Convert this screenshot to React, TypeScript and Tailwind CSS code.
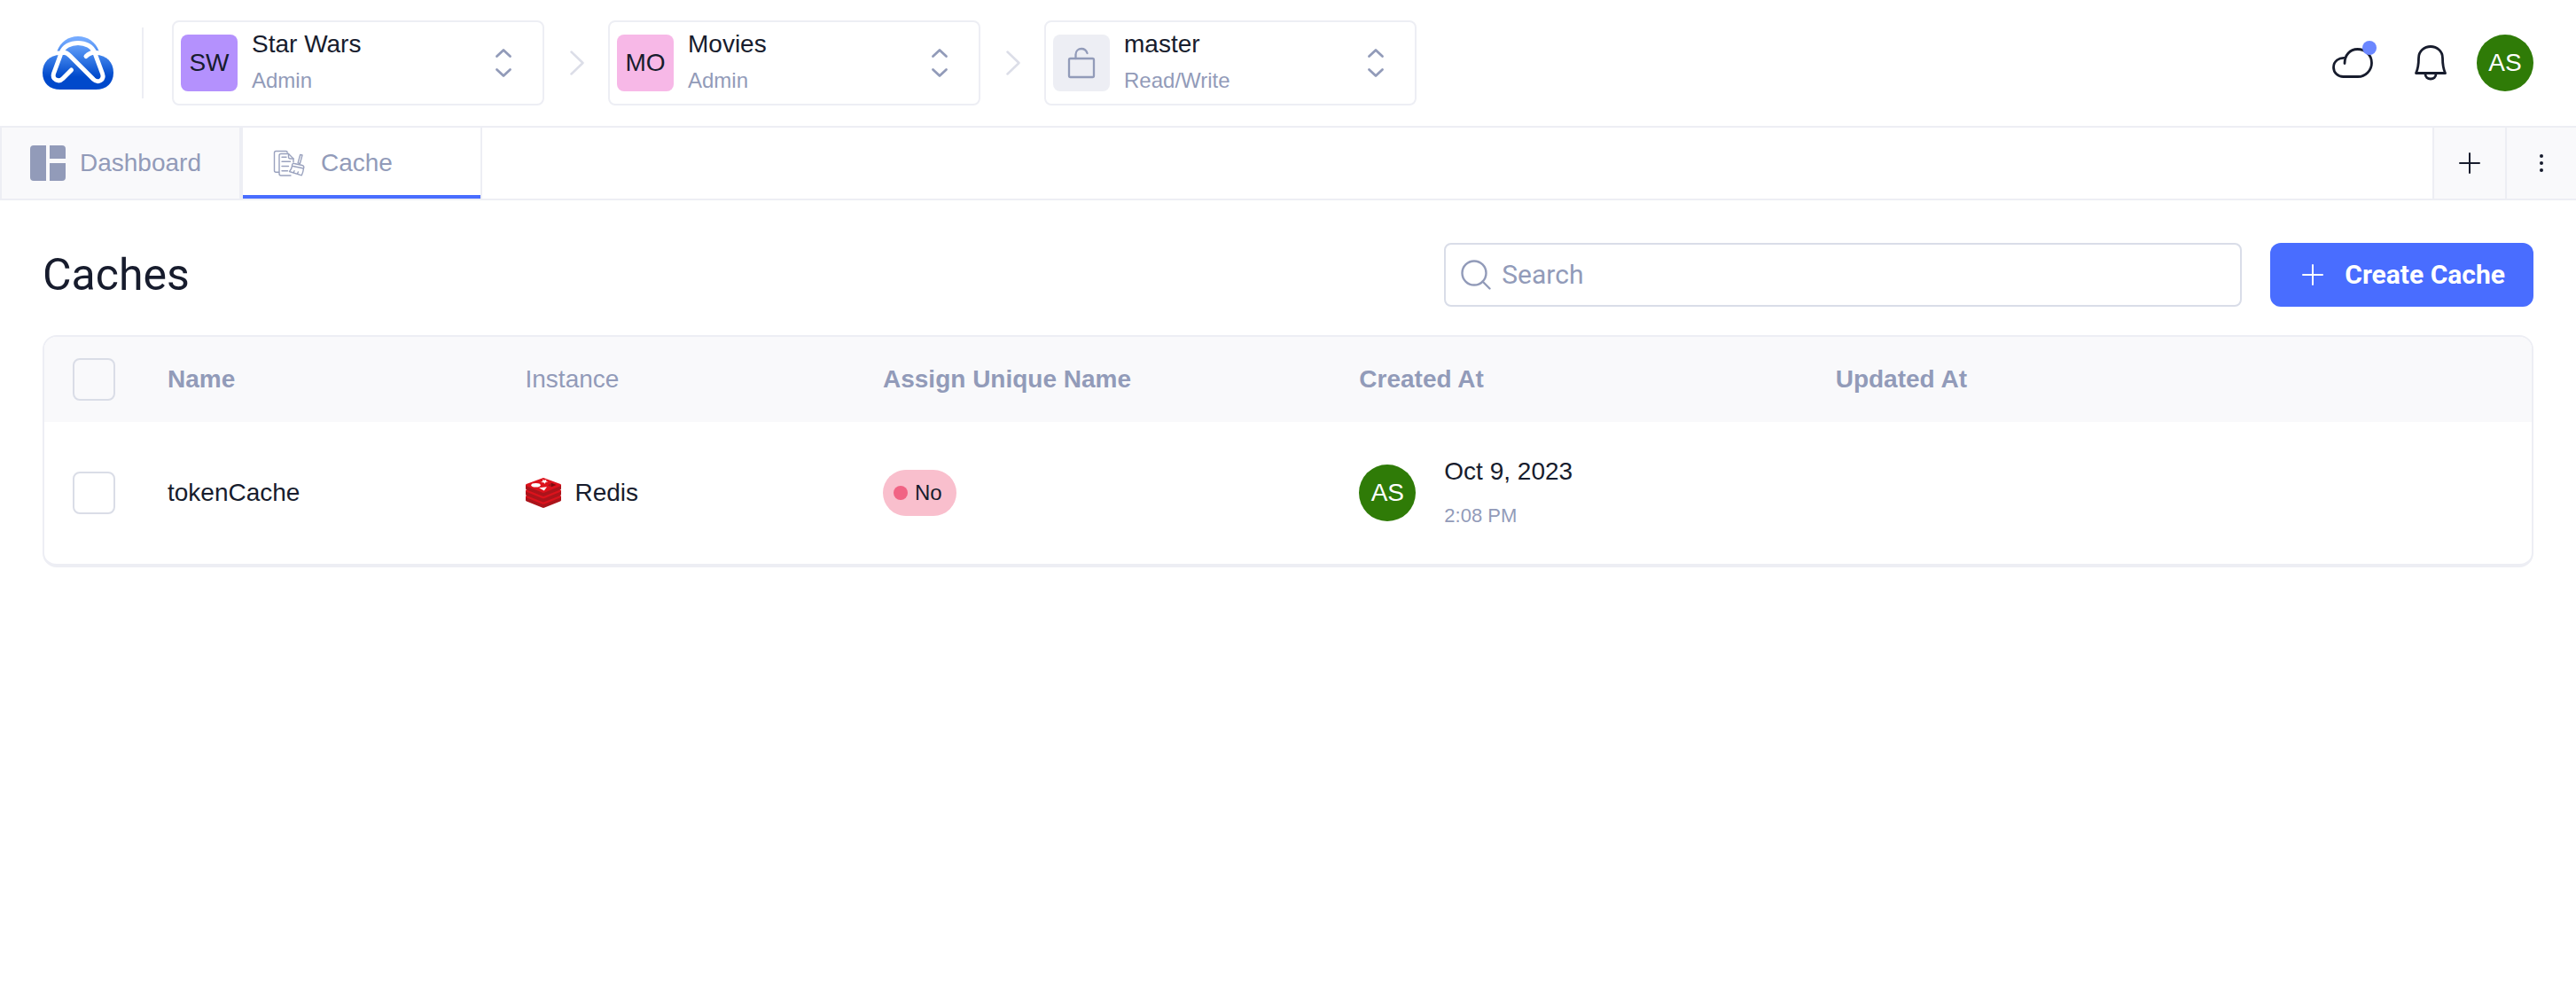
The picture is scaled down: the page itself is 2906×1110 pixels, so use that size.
import type { ReactNode } from "react";

function Logo() {
  return (
    <svg viewBox="0 0 80 60" className="h-[60px] w-20 shrink-0" fill="none" aria-hidden="true">
      <defs>
        <linearGradient id="sky" x1="0" y1="0" x2="0" y2="60" gradientUnits="userSpaceOnUse">
          <stop offset="0.05" stopColor="#75abff" />
          <stop offset="0.35" stopColor="#4285ec" />
          <stop offset="0.76" stopColor="#0049cb" />
        </linearGradient>
      </defs>
      <g fill="url(#sky)">
        <path d="M16.5 16.5C20 6.5 29 0 40 0s20 6.5 23.5 16.5Z" />
        <path d="M0 41C0 29 8 21 20 21h40c12 0 20 8 20 20s-8 19-20 19H20C8 60 0 53 0 41Z" />
        <path d="M23 24C27 6 53 6 58 24Z" />
      </g>
      <g stroke="#fff" strokeWidth="5" strokeLinecap="round" strokeLinejoin="round">
        <path d="M32.5 38 23 47.5c-5 5-12.5 1-10.5-5.5L21 19C26 3.5 54 3.5 59 19l8.5 23c2.5 7-4.500 11.500-10 6.500L31 22c-3-3-7-4.500-10-3" />
        <path d="M49 22.500c3-3 7-5 12-4" />
      </g>
    </svg>
  );
}

function UpDown() {
  return (
    <svg viewBox="0 0 20 34" className="h-[34px] w-5 shrink-0" fill="none" stroke="#929bb9" strokeWidth="2.8" strokeLinecap="round" strokeLinejoin="round" aria-hidden="true">
      <path d="m2.500 9.500 7.500-7 7.500 7M2.500 24.500l7.500 7 7.500-7" />
    </svg>
  );
}

function Separator() {
  return (
    <svg viewBox="0 0 18 30" className="mx-[27px] h-[30px] w-[18px] shrink-0" fill="none" stroke="#dcdee8" strokeWidth="2.5" strokeLinecap="round" strokeLinejoin="round" aria-hidden="true">
      <path d="m3.500 2.500 13 12.500-13 12.500" />
    </svg>
  );
}

function LockOpen() {
  return (
    <svg viewBox="0 0 32 36" className="h-9 w-8" fill="none" stroke="#929bb9" strokeWidth="2.3" strokeLinecap="round" strokeLinejoin="round" aria-hidden="true">
      <rect x="2" y="13" width="28" height="21" rx="1.5" />
      <path d="M9.500 13V8.500C9.500 4.500 12.500 2 16 2c3 0 5.500 2 6.500 5" />
    </svg>
  );
}

function CloudIcon() {
  return (
    <svg viewBox="0 0 46 34" className="h-[34px] w-[46px]" fill="none" stroke="#171c2d" strokeWidth="2.8" strokeLinecap="round" strokeLinejoin="round" aria-hidden="true">
      <path d="M14 17.500C14 8 20 1.500 28.500 1.500 37.500 1.500 44.500 8 44.500 17c0 8.500-7 15.500-15.500 15.500H12.500c-6 0-11-4.500-11-10.500 0-7 6-11.500 13.500-10.500" />
    </svg>
  );
}

function BellIcon() {
  return (
    <svg viewBox="0 0 36 40" className="h-10 w-9" fill="none" stroke="#171c2d" strokeWidth="2.8" strokeLinecap="round" strokeLinejoin="round" aria-hidden="true">
      <path d="M1.500 31.500C4 26 4.500 22 4.500 14.500 4.500 6.500 11 1.500 18 1.500s13.500 5 13.500 13c0 7.500.5 11.500 3 17Z" />
      <path d="M12 32.500c0 3.500 2.800 5.500 6 5.500s6-2 6-5.500" />
    </svg>
  );
}

function DashboardIcon() {
  return (
    <svg viewBox="0 0 40 40" className="size-10 shrink-0" fill="#929bb9" aria-hidden="true">
      <path d="M4 0h14v40H4a4 4 0 0 1-4-4V4a4 4 0 0 1 4-4ZM22 0h14a4 4 0 0 1 4 4v11H22ZM22 20h18v16a4 4 0 0 1-4 4H22Z" />
    </svg>
  );
}

function CacheIcon() {
  return (
    <svg viewBox="0 0 36 30" className="h-[30px] w-9 shrink-0" fill="none" stroke="#9aa2be" strokeWidth="1.4" strokeLinecap="round" strokeLinejoin="round" aria-hidden="true">
      <path d="M6.500 25.200H3.200C2 25.200 1.500 24.600 1.500 23.500V3.200c0-1.100.6-1.700 1.700-1.700h11.300c1 0 1.700.6 1.700 1.700" />
      <path d="M20 29H9c-1.300 0-2-.7-2-2V6.500c0-1.300.7-2 2-2h8.500L23 10v4" />
      <path d="M17.500 4.500V8c0 1.300.7 2 2 2H23" />
      <path d="M10 8.300h5M10 13.300h9.500M10 18.500h7.500M10 23.700h6.500" />
      <path d="M30.700 5.500 33 6l-2.600 9.500-2.300-.6Z" />
      <path d="M21.500 17.500c0-1.500 1-2.500 2.500-2l9 2c1.500.4 2 1.500 1.700 2.700l-.2.800-13-2.700ZM21.500 18.500c-.5 2.500-1.500 4.500-3 6l13.800 4.300c1-2 1.800-4.500 2.200-7.800M23 25.700l1-2M27.500 27.200l.8-2.200" />
    </svg>
  );
}

function DotsIcon() {
  return (
    <svg viewBox="0 0 4 20" className="h-5 w-1" fill="#171c2d" aria-hidden="true">
      <circle cx="2" cy="2" r="2" />
      <circle cx="2" cy="10" r="2" />
      <circle cx="2" cy="18" r="2" />
    </svg>
  );
}

function PlusIcon() {
  return (
    <svg viewBox="0 0 24 24" className="size-6 shrink-0" fill="none" stroke="currentColor" strokeWidth="2" strokeLinecap="round" aria-hidden="true">
      <path d="M12 1v22M1 12h22" />
    </svg>
  );
}

function SearchIcon() {
  return (
    <svg viewBox="0 0 34 34" className="size-[34px] shrink-0" fill="none" stroke="#929bb9" strokeWidth="2.4" strokeLinecap="round" aria-hidden="true">
      <circle cx="15" cy="15" r="13.5" />
      <path d="m24.500 24.500 8 8" />
    </svg>
  );
}

function RedisIcon() {
  return (
    <svg viewBox="0 0 40 35" className="h-[35px] w-10 shrink-0" aria-hidden="true">
      {[13, 6.5, 0].map((y) => (
        <g key={y} transform={`translate(0 ${y})`}>
          <path fill="#ab141b" d="M0 8v4.300c0 .5.300.8 1 1.100l17.500 7.200q1.500.7 3 0L39 13.400c.7-.3 1-.6 1-1.100V8Z" />
          <path fill="#dc121c" d="M.8 7 18.500.4q1.500-.6 3 0L39.200 7c1 .5 1 1.700 0 2.200l-17.700 7.300q-1.500.7-3 0L.8 9.200C-.2 8.700-.2 7.500.8 7Z" />
        </g>
      ))}
      <ellipse cx="11.500" cy="8.300" rx="5.200" ry="2.300" fill="#fff" />
      <path fill="#fff" d="m19 2 2 .7 2.500-.7-.6 1.700 2.400.9-2.700.5-1 1.700-1.300-1.600-3.500-.3 2.500-1ZM15 11.300l9-1-3.200 4.300Z" />
      <path fill="#7a0c0e" d="m29 5.800 5.500 2.300-5.500 2.200Z" />
      <path fill="#a0161d" d="m29 5.800-4 2.600 4 1.900Z" />
    </svg>
  );
}

function Selector({ badge, badgeColor, name, role }: { badge: ReactNode; badgeColor: string; name: string; role: string }) {
  return (
    <button type="button" className="flex h-24 w-[420px] shrink-0 items-center rounded-lg border-2 border-[#edeef4] pr-[34px] pl-2 text-left">
      <span className={`flex size-16 shrink-0 items-center justify-center rounded-lg text-[28px] text-[#171c2d] ${badgeColor}`}>{badge}</span>
      <span className="ml-4 flex-1">
        <span className="block text-[28px] leading-10">{name}</span>
        <span className="block text-2xl leading-[42px] text-[#929bb9]">{role}</span>
      </span>
      <UpDown />
    </button>
  );
}

function Avatar() {
  return (
    <span className="flex size-16 shrink-0 items-center justify-center rounded-full bg-[#2f7b07] text-[28px] text-white">AS</span>
  );
}

const checkbox = "block size-12 appearance-none rounded-lg border-2 border-[#dadde7] checked:border-[#496dff] checked:bg-[#496dff]";

export default function App() {
  return (
    <div className="min-h-screen bg-white font-['Liberation_Sans',Arial,sans-serif] text-[28px] text-[#171c2d]">
      <header className="flex h-[142px] items-center px-12">
        <a href="#home" aria-label="Home">
          <Logo />
        </a>
        <div className="mx-8 h-20 w-0.5 bg-[#edeef4]" />
        <Selector badge="SW" badgeColor="bg-[#b491fd]" name="Star Wars" role="Admin" />
        <Separator />
        <Selector badge="MO" badgeColor="bg-[#f7b8e7]" name="Movies" role="Admin" />
        <Separator />
        <Selector badge={<LockOpen />} badgeColor="bg-[#edeef4]" name="master" role="Read/Write" />
        <div className="ml-auto flex items-center">
          <button type="button" aria-label="Deployments" className="relative mr-[47px]">
            <CloudIcon />
            <span className="absolute -top-2 -right-1 size-4 rounded-full bg-[#6b87ff]" />
          </button>
          <button type="button" aria-label="Notifications" className="mr-[34px]">
            <BellIcon />
          </button>
          <button type="button" aria-label="Account">
            <Avatar />
          </button>
        </div>
      </header>

      <nav className="flex h-[84px] border-y-2 border-l-2 border-[#edeef4] text-[#929bb9]">
        <a href="#dashboard" className="flex w-[270px] items-center gap-4 border-r-2 border-[#edeef4] bg-[#f9f9fb] pl-8">
          <DashboardIcon />
          Dashboard
        </a>
        <a href="#cache" aria-current="page" className="flex w-[272px] border-x-2 border-[#edeef4]">
          <span className="flex flex-1 items-center gap-[18px] border-b-4 border-[#496dff] pt-1 pl-[34px]">
            <CacheIcon />
            Cache
          </span>
        </a>
        <button type="button" aria-label="New tab" className="ml-auto flex w-[82px] items-center justify-center border-l-2 border-[#edeef4] bg-[#f9f9fb] text-[#171c2d]">
          <PlusIcon />
        </button>
        <button type="button" aria-label="Tab options" className="flex w-20 items-center justify-center border-l-2 border-[#edeef4] bg-[#f9f9fb]">
          <DotsIcon />
        </button>
      </nav>

      <main className="px-12 pt-12">
        <div className="flex h-[72px] items-center gap-8">
          <h1 className="mr-auto font-[Roboto,sans-serif] text-[50px]">Caches</h1>
          <label className="flex h-full w-[900px] items-center gap-3 rounded-lg border-2 border-[#d9dde8] pr-4 pl-[17px]">
            <SearchIcon />
            <input type="search" aria-label="Search" placeholder="Search" className="min-w-0 flex-1 font-[Roboto,sans-serif] text-3xl outline-none placeholder:text-[#929bb9]" />
          </label>
          <button type="button" className="flex h-full items-center gap-6 rounded-xl bg-[#496dff] pr-8 pl-9 font-[Roboto,sans-serif] text-3xl font-bold text-white">
            <PlusIcon />
            Create Cache
          </button>
        </div>

        <div className="mt-8 overflow-hidden rounded-2xl border-2 border-b-4 border-[#edeef4]">
          <table className="w-full table-fixed text-left">
            <colgroup>
              <col className="w-[139px]" />
              <col className="w-[14.38%]" />
              <col className="w-[14.38%]" />
              <col className="w-[19.15%]" />
              <col className="w-[19.15%]" />
              <col />
            </colgroup>
            <thead className="bg-[#f9f9fb] text-[#929bb9]">
              <tr className="h-24">
                <th className="pl-8">
                  <input type="checkbox" aria-label="Select all" className={checkbox} />
                </th>
                <th>Name</th>
                <th className="font-normal">Instance</th>
                <th>Assign Unique Name</th>
                <th>Created At</th>
                <th>Updated At</th>
              </tr>
            </thead>
            <tbody>
              <tr className="h-40">
                <td className="pl-8">
                  <input type="checkbox" aria-label="Select tokenCache" className={checkbox} />
                </td>
                <td>tokenCache</td>
                <td>
                  <div className="flex items-center gap-4">
                    <RedisIcon />
                    Redis
                  </div>
                </td>
                <td>
                  <div className="flex">
                    <span className="flex h-[52px] items-center gap-2 rounded-full bg-[#f9bfcd] pr-4 pl-3 text-2xl">
                      <span className="size-4 rounded-full bg-[#f16384]" />
                      No
                    </span>
                  </div>
                </td>
                <td>
                  <div className="flex items-center gap-8">
                    <Avatar />
                    <div>
                      <div className="leading-[52px]">Oct 9, 2023</div>
                      <div className="text-[22px] leading-12 text-[#929bb9]">2:08 PM</div>
                    </div>
                  </div>
                </td>
                <td />
              </tr>
            </tbody>
          </table>
        </div>
      </main>
    </div>
  );
}
